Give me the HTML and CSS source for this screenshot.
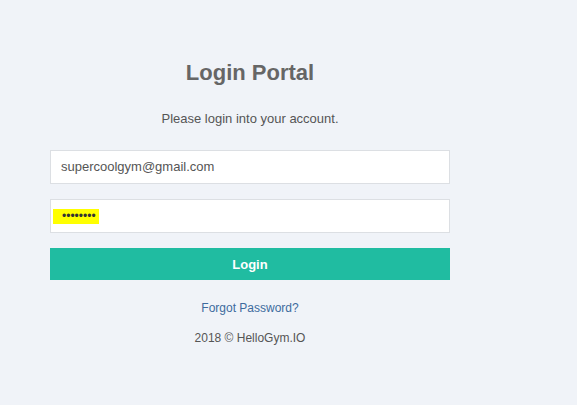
FILE: index.html
```html
<!DOCTYPE html>
<html lang="en">
<head>
    <meta charset="UTF-8">
    <meta name="viewport" content="width=device-width, initial-scale=1.0">
    <title>Login Portal</title>
    <link rel="stylesheet" href="styles.css">
</head>
<body>
    <div class="login">
        <h1>Login Portal</h1>
        <p class="intro">Please login into your account.</p>
        <div class="field">supercoolgym@gmail.com</div>
        <div class="field"><span class="mark">&bull;&bull;&bull;&bull;&bull;&bull;&bull;&bull;</span></div>
        <button class="btn">Login</button>
        <a class="forgot" href="#">Forgot Password?</a>
        <p class="footer">2018 &copy; HelloGym.IO</p>
    </div>
</body>
</html>
```

FILE: styles.css
```css
body {
    margin: 0;
    background-color: #f0f3f8;
    font-family: "Liberation Sans", Arial, sans-serif;
    color: #555;
}
.login {
    width: 400px;
    margin-left: 50px;
    padding-top: 60px;
    text-align: center;
    display: flex;
    flex-direction: column;
}
h1 {
    margin: 0;
    font-size: 22px;
    line-height: 25px;
    color: #666;
}
.intro {
    margin: 26px 0 24px;
    font-size: 13px;
    line-height: 15px;
}
.field {
    box-sizing: border-box;
    height: 34px;
    margin-bottom: 15px;
    padding: 0 10px;
    background: white;
    border: 1px solid #dcdfe3;
    font-size: 13px;
    line-height: 32px;
    text-align: left;
    color: #555;
}
.mark {
    display: inline-block;
    height: 15px;
    line-height: 15px;
    margin-left: -8px;
    padding: 0 3px 0 9px;
    vertical-align: middle;
    background: #ffff00;
    color: #333;
    font-size: 12px;
}
.btn {
    height: 32px;
    border: none;
    background: #20bca1;
    color: white;
    font-family: inherit;
    font-size: 13px;
    font-weight: bold;
    cursor: pointer;
}
.forgot {
    margin-top: 21px;
    font-size: 12px;
    line-height: 14px;
    color: #3d6b9e;
    text-decoration: none;
}
.footer {
    margin: 16px 0 0;
    font-size: 12px;
    line-height: 14px;
}
```
